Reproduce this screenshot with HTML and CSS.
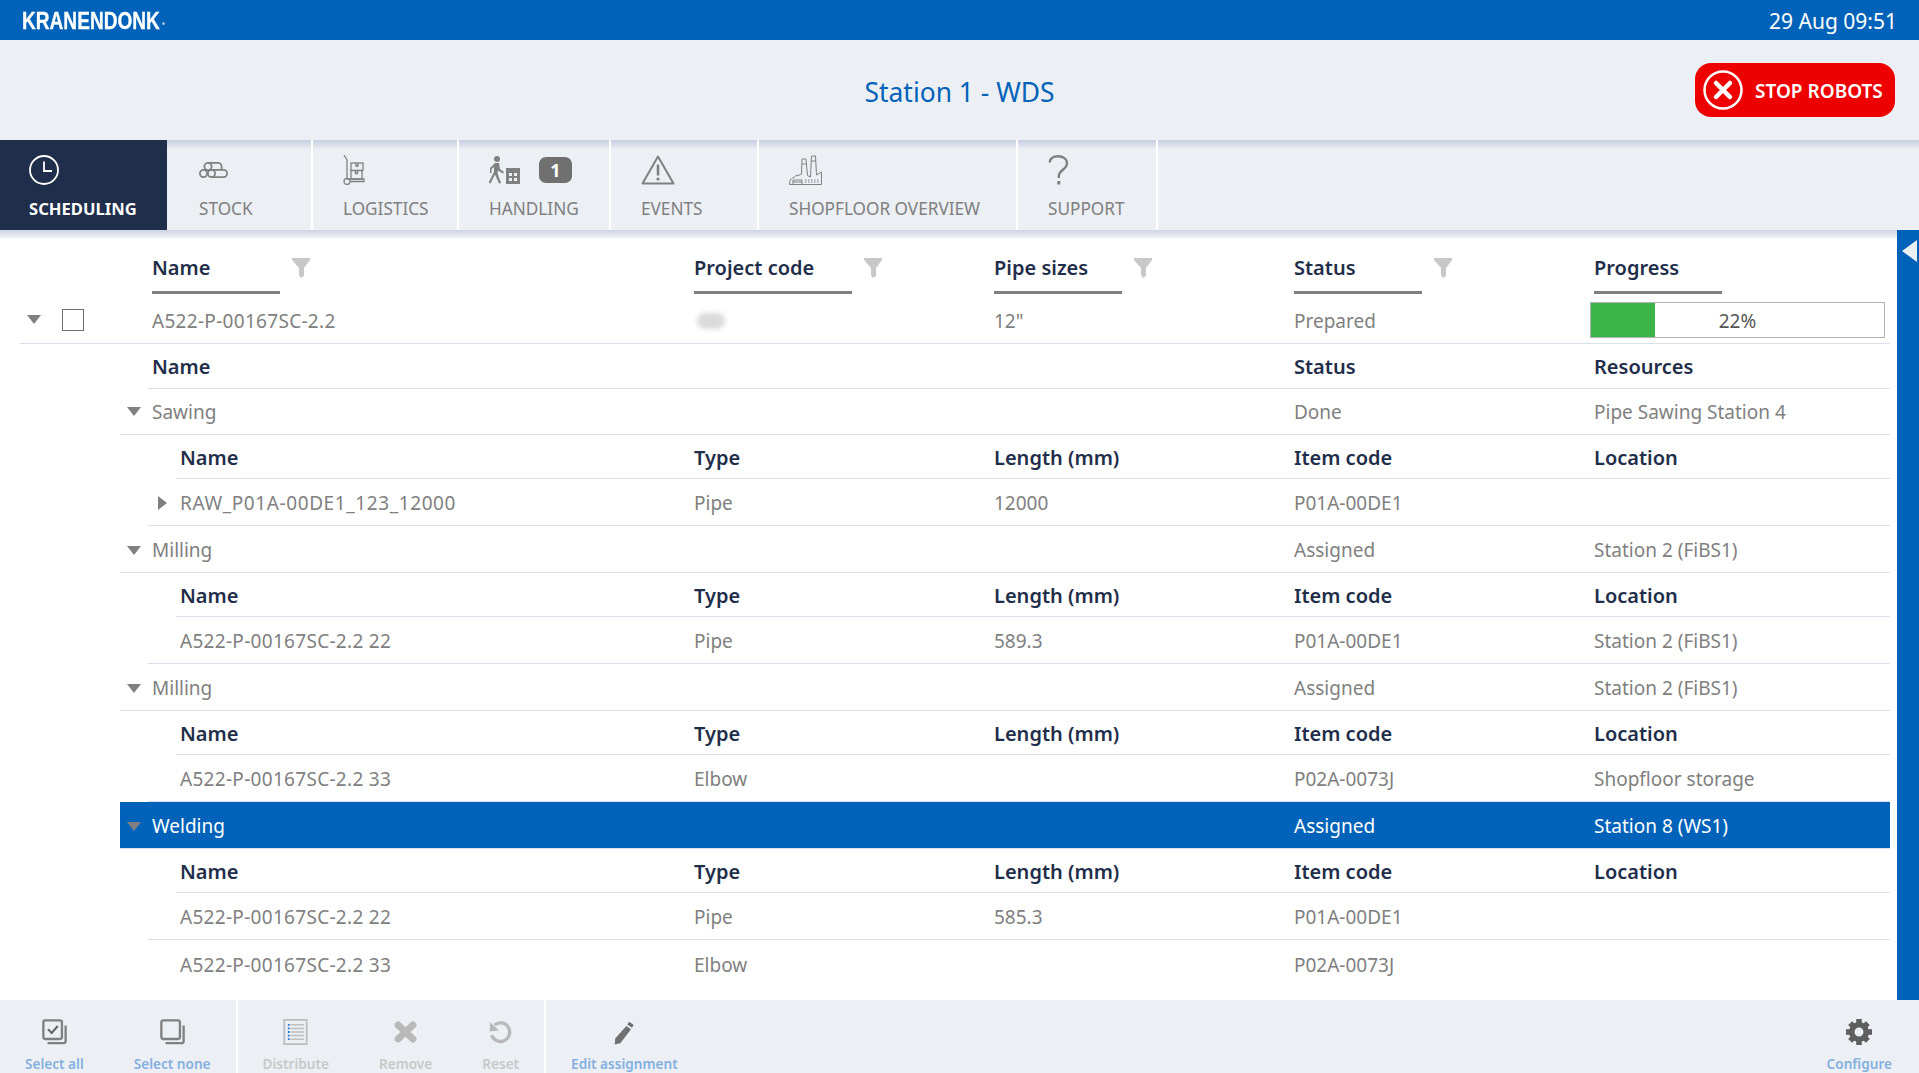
FILE: index.html
```html
<!DOCTYPE html>
<html lang="en">
<head>
    <meta charset="UTF-8">
    <meta name="viewport" content="width=device-width, initial-scale=1.0">
    <title>Station 1 - WDS</title>
    <link rel="stylesheet" href="styles.css">
</head>
<body>

<svg class="defs" width="0" height="0">
    <symbol id="i-funnel" viewBox="0 0 18 20">
        <path d="M0 0h18v2l-6 8v8l-3 2-2-3v-7L0 2z" fill="#c8c8c8"/>
    </symbol>
</svg>

<!-- top bar -->
<div class="topbar">
    <div class="logo">KRANENDONK<span class="logo-dot"></span></div>
    <div class="clock">29 Aug 09:51</div>
</div>

<!-- station title -->
<div class="header">
    <div></div>
    <h1 class="title">Station 1 - WDS</h1>
    <button class="stop-btn" type="button">
        <svg width="40" height="40" viewBox="0 0 40 40">
            <circle cx="20" cy="20" r="18.5" fill="none" stroke="#fff" stroke-width="2.5"/>
            <path d="M13 13l14 14M27 13L13 27" stroke="#fff" stroke-width="4.5" stroke-linecap="round"/>
        </svg>
        <span class="stop-text">STOP ROBOTS</span>
    </button>
</div>

<!-- main tabs -->
<div class="tabs">
    <div class="tab tab-active tab-scheduling">
        <div class="tab-icon">
            <svg width="30" height="30" viewBox="0 0 30 30">
                <circle cx="15" cy="15" r="14" fill="none" stroke="#fff" stroke-width="1.8"/>
                <path d="M15 6.5V16h8" fill="none" stroke="#fff" stroke-width="1.8"/>
            </svg>
        </div>
        <div class="tab-label">SCHEDULING</div>
    </div>
    <div class="tab tab-stock">
        <div class="tab-icon">
            <svg width="29" height="30" viewBox="0 0 29 30">
                <g fill="none" stroke="#808080" stroke-width="1.8">
                    <circle cx="4.5" cy="18.5" r="3.6"/>
                    <circle cx="12.5" cy="18.5" r="3.6"/>
                    <circle cx="9" cy="11.5" r="3.6"/>
                    <path d="M9 7.9h10a3.6 3.6 0 0 1 3.6 3.6V15M12.5 14.9h12a3.6 3.6 0 0 1 0 7.2h-12"/>
                </g>
            </svg>
        </div>
        <div class="tab-label">STOCK</div>
    </div>
    <div class="tab tab-logistics">
        <div class="tab-icon">
            <svg width="22" height="30" viewBox="0 0 22 30">
                <g fill="none" stroke="#808080" stroke-width="1.3">
                    <path d="M1 0l3 5v19"/>
                    <circle cx="4" cy="26.5" r="3"/>
                    <path d="M7 26.5h14V24H4"/>
                    <rect x="8" y="8" width="12" height="7.5"/>
                    <rect x="8" y="15.5" width="11" height="8.5"/>
                    <path d="M13 8v3h2V8M12.5 15.5v3h2v-3"/>
                </g>
            </svg>
        </div>
        <div class="tab-label">LOGISTICS</div>
    </div>
    <div class="tab tab-handling">
        <div class="tab-icon">
            <svg width="31" height="30" viewBox="0 0 31 30">
                <circle cx="8" cy="4" r="3" fill="#808080"/>
                <path d="M6 8h4l1 6 4 3-1 1.500-5-3-.5 3 3.500 9.500-2 .5-4-9-4.500 9-2-1L5 17V12l-2.500 2v4H1v-5z" fill="#808080"/>
                <rect x="17" y="13" width="14" height="16" fill="#808080"/>
                <g fill="#eceff4">
                    <rect x="20" y="18" width="3" height="3"/>
                    <rect x="25" y="18" width="3" height="3"/>
                    <rect x="20" y="23" width="3" height="3"/>
                    <rect x="25" y="23" width="3" height="3"/>
                </g>
            </svg>
            <span class="badge">1</span>
        </div>
        <div class="tab-label">HANDLING</div>
    </div>
    <div class="tab tab-events">
        <div class="tab-icon">
            <svg width="34" height="30" viewBox="0 0 34 30">
                <path d="M17 1.500L1.500 28.500h31z" fill="none" stroke="#808080" stroke-width="2" stroke-linejoin="round"/>
                <path d="M17 9.500v11" stroke="#808080" stroke-width="2.600"/>
                <circle cx="17" cy="24" r="1.600" fill="#808080"/>
            </svg>
        </div>
        <div class="tab-label">EVENTS</div>
    </div>
    <div class="tab tab-shopfloor">
        <div class="tab-icon">
            <svg width="33" height="30" viewBox="0 0 33 30">
                <g fill="none" stroke="#808080" stroke-width="1">
                    <path d="M.5 29.500h32V17l-5 3L26.500 1h-4l-1 21-3-1.500L17 4h-4l-.5 15L8 21v-1l-7 5z"/>
                    <path d="M22 6h5M13 9h4"/>
                    <path d="M4 29v-4h9v4M4 27h9"/>
                    <path d="M16 27h15M16 25h15" stroke-dasharray="1.500 1.500"/>
                </g>
            </svg>
        </div>
        <div class="tab-label">SHOPFLOOR OVERVIEW</div>
    </div>
    <div class="tab tab-support">
        <div class="tab-icon">
            <svg width="21" height="30" viewBox="0 0 21 30">
                <path d="M1.500 7.500C2 3.500 5.500 1.200 10 1.200c5 0 9 2.800 9 7 0 6.500-8.200 6.500-8.200 13v1.800" fill="none" stroke="#808080" stroke-width="2.400"/>
                <rect x="9.300" y="26" width="3" height="3.500" fill="#808080"/>
            </svg>
        </div>
        <div class="tab-label">SUPPORT</div>
    </div>
</div>

<div class="content">
    <div class="panel">

        <!-- column headers -->
        <div class="col-heads">
            <div class="col-head col-name"><span class="col-label">Name</span><svg class="funnel"><use href="#i-funnel"/></svg></div>
            <div class="col-head"><span class="col-label col-label-wide">Project code</span><svg class="funnel"><use href="#i-funnel"/></svg></div>
            <div class="col-head"><span class="col-label">Pipe sizes</span><svg class="funnel"><use href="#i-funnel"/></svg></div>
            <div class="col-head"><span class="col-label">Status</span><svg class="funnel"><use href="#i-funnel"/></svg></div>
            <div class="col-head col-progress"><span class="col-label">Progress</span></div>
        </div>

        <!-- order -->
        <div class="row row-order">
            <div class="cell-name"><span class="arrow-down"></span><span class="check"></span><span class="order-name">A522-P-00167SC-2.2</span></div>
            <div class="cell"><span class="blurred"></span></div>
            <div class="cell">12"</div>
            <div class="cell">Prepared</div>
            <div class="cell cell-last">
                <div class="progress"><div class="progress-fill" style="width: 22%"></div><span class="progress-text">22%</span></div>
            </div>
        </div>

        <div class="row row-head1">
            <div class="cell-name">Name</div>
            <div class="cell"></div>
            <div class="cell"></div>
            <div class="cell">Status</div>
            <div class="cell cell-last">Resources</div>
        </div>

        <!-- Sawing -->
        <div class="row row-group row-sawing">
            <div class="cell-name"><span class="arrow-down"></span>Sawing</div>
            <div class="cell"></div>
            <div class="cell"></div>
            <div class="cell">Done</div>
            <div class="cell cell-last">Pipe Sawing Station 4</div>
        </div>
        <div class="row row-head2">
            <div class="cell-name">Name</div>
            <div class="cell">Type</div>
            <div class="cell">Length (mm)</div>
            <div class="cell">Item code</div>
            <div class="cell cell-last">Location</div>
        </div>
        <div class="row row-item">
            <div class="cell-name cell-raw"><span class="arrow-right"></span>RAW_P01A-00DE1_123_12000</div>
            <div class="cell">Pipe</div>
            <div class="cell">12000</div>
            <div class="cell">P01A-00DE1</div>
            <div class="cell cell-last"></div>
        </div>

        <!-- Milling -->
        <div class="row row-group">
            <div class="cell-name"><span class="arrow-down"></span>Milling</div>
            <div class="cell"></div>
            <div class="cell"></div>
            <div class="cell">Assigned</div>
            <div class="cell cell-last">Station 2 (FiBS1)</div>
        </div>
        <div class="row row-head2">
            <div class="cell-name">Name</div>
            <div class="cell">Type</div>
            <div class="cell">Length (mm)</div>
            <div class="cell">Item code</div>
            <div class="cell cell-last">Location</div>
        </div>
        <div class="row row-item">
            <div class="cell-name">A522-P-00167SC-2.2 22</div>
            <div class="cell">Pipe</div>
            <div class="cell">589.3</div>
            <div class="cell">P01A-00DE1</div>
            <div class="cell cell-last">Station 2 (FiBS1)</div>
        </div>

        <!-- Milling -->
        <div class="row row-group">
            <div class="cell-name"><span class="arrow-down"></span>Milling</div>
            <div class="cell"></div>
            <div class="cell"></div>
            <div class="cell">Assigned</div>
            <div class="cell cell-last">Station 2 (FiBS1)</div>
        </div>
        <div class="row row-head2">
            <div class="cell-name">Name</div>
            <div class="cell">Type</div>
            <div class="cell">Length (mm)</div>
            <div class="cell">Item code</div>
            <div class="cell cell-last">Location</div>
        </div>
        <div class="row row-item">
            <div class="cell-name">A522-P-00167SC-2.2 33</div>
            <div class="cell">Elbow</div>
            <div class="cell"></div>
            <div class="cell">P02A-0073J</div>
            <div class="cell cell-last">Shopfloor storage</div>
        </div>

        <!-- Welding (selected) -->
        <div class="row row-group row-selected">
            <div class="cell-name"><span class="arrow-down"></span>Welding</div>
            <div class="cell"></div>
            <div class="cell"></div>
            <div class="cell">Assigned</div>
            <div class="cell cell-last">Station 8 (WS1)</div>
        </div>
        <div class="row row-head2">
            <div class="cell-name">Name</div>
            <div class="cell">Type</div>
            <div class="cell">Length (mm)</div>
            <div class="cell">Item code</div>
            <div class="cell cell-last">Location</div>
        </div>
        <div class="row row-item">
            <div class="cell-name">A522-P-00167SC-2.2 22</div>
            <div class="cell">Pipe</div>
            <div class="cell">585.3</div>
            <div class="cell">P01A-00DE1</div>
            <div class="cell cell-last"></div>
        </div>
        <div class="row row-item row-end">
            <div class="cell-name">A522-P-00167SC-2.2 33</div>
            <div class="cell">Elbow</div>
            <div class="cell"></div>
            <div class="cell">P02A-0073J</div>
            <div class="cell cell-last"></div>
        </div>
    </div>

    <div class="side-handle"><span class="side-arrow"></span></div>
</div>

<!-- bottom toolbar -->
<div class="toolbar">
    <div class="tool-group">
        <div class="tool">
            <svg width="27" height="28" viewBox="0 0 27 28">
                <rect x="1.500" y="1.500" width="20" height="20" rx="2" fill="none" stroke="#808080" stroke-width="2.500"/>
                <path d="M6.500 11l4 4 6.500-7.500" fill="none" stroke="#666" stroke-width="2.200"/>
                <path d="M25.500 7v17a2 2 0 0 1-2 2H6" fill="none" stroke="#808080" stroke-width="2.500"/>
            </svg>
            <span>Select all</span>
        </div>
        <div class="tool">
            <svg width="27" height="28" viewBox="0 0 27 28">
                <rect x="1.500" y="1.500" width="20" height="20" rx="2" fill="none" stroke="#808080" stroke-width="2.500"/>
                <path d="M25.500 7v17a2 2 0 0 1-2 2H6" fill="none" stroke="#808080" stroke-width="2.500"/>
            </svg>
            <span>Select none</span>
        </div>
    </div>
    <div class="tool-group">
        <div class="tool tool-off">
            <svg width="27" height="29" viewBox="0 0 27 29">
                <rect x="1" y="1" width="25" height="27" fill="none" stroke="#bdbdbd" stroke-width="2"/>
                <path d="M8 6.500h15M8 10.500h15M8 14.500h15M8 18.500h15M8 22.500h15" stroke="#bdbdbd" stroke-width="1.600"/>
                <path d="M6 5.500v2M6 9.500v2M6 13.500v2M6 17.500v2M6 21.500v2" stroke="#1a73c8" stroke-width="2"/>
            </svg>
            <span>Distribute</span>
        </div>
        <div class="tool tool-off">
            <svg width="25" height="28" viewBox="0 0 25 28">
                <path d="M4.500 6.500l16 15M20.500 6.500l-16 15" stroke="#b9b9b9" stroke-width="7.500" stroke-linecap="round"/>
            </svg>
            <span>Remove</span>
        </div>
        <div class="tool tool-off">
            <svg width="25" height="28" viewBox="0 0 25 28">
                <path d="M6 6.500a10 10 0 1 1-3 11" fill="none" stroke="#b9b9b9" stroke-width="3.600"/>
                <path d="M1 3.500l0 10 10-1z" fill="#b9b9b9"/>
            </svg>
            <span>Reset</span>
        </div>
    </div>
    <div class="tool-group tool-group-plain">
        <div class="tool">
            <svg width="25" height="28" viewBox="0 0 25 28">
                <path d="M17.500 3l5 3.500-2 3-5-3.500zM14.500 7.500l5 3.500L8 26l-6 1.500.5-6.500z" fill="#707070"/>
            </svg>
            <span>Edit assignment</span>
        </div>
    </div>
    <div class="tool-group tool-group-plain tool-group-end">
        <div class="tool">
            <svg width="28" height="28" viewBox="0 0 28 28">
                <circle cx="14" cy="14" r="7.800" fill="none" stroke="#5f5f5f" stroke-width="6"/>
                <g fill="#5f5f5f">
                    <rect x="11" y="0" width="6" height="6"/>
                    <rect x="11" y="22" width="6" height="6"/>
                    <rect x="0" y="11" width="6" height="6"/>
                    <rect x="22" y="11" width="6" height="6"/>
                    <rect x="11" y="0.500" width="6" height="6" transform="rotate(45 14 14)"/>
                    <rect x="11" y="21.500" width="6" height="6" transform="rotate(45 14 14)"/>
                    <rect x="0.500" y="11" width="6" height="6" transform="rotate(45 14 14)"/>
                    <rect x="21.500" y="11" width="6" height="6" transform="rotate(45 14 14)"/>
                </g>
            </svg>
            <span>Configure</span>
        </div>
    </div>
</div>

</body>
</html>
```

FILE: styles.css
```css
/* general */
html, body {
    margin: 0;
    height: 100%;
}

body {
    font-family: "Noto Sans", "Open Sans", sans-serif;
    font-size: 19px;
    color: #808080;
    background-color: #fff;
    display: flex;
    flex-direction: column;
    height: 1073px;
    overflow: hidden;
}

.defs {
    position: absolute;
}

/* top bar */
.topbar {
    height: 40px;
    flex: none;
    box-sizing: border-box;
    padding: 2px 22px 0;
    background-color: #0063b9;
    color: #fff;
    display: flex;
    justify-content: space-between;
    align-items: center;
}

.logo {
    font-family: "Liberation Sans", sans-serif;
    font-weight: bold;
    font-size: 23px;
    display: flex;
    align-items: center;
    -webkit-text-stroke: 0.3px #fff;
    transform: scaleX(0.83);
    transform-origin: left center;
}

.logo-dot {
    width: 3px;
    height: 3px;
    margin-left: 3px;
    margin-top: 4px;
    border-radius: 50%;
    background-color: #b9c6d6;
}

.clock {
    font-size: 21px;
}

/* title row */
.header {
    height: 100px;
    flex: none;
    background-color: #eceff4;
    display: grid;
    grid-template-columns: 1fr auto 1fr;
    align-items: center;
}

.title {
    margin: 3px 0 0;
    font-size: 26.4px;
    font-weight: normal;
    color: #0063b9;
}

.stop-btn {
    justify-self: end;
    margin-right: 24px;
    width: 200px;
    height: 54px;
    padding: 0 0 0 8px;
    border: none;
    border-radius: 16px;
    background-color: #ee0000;
    color: #fff;
    font-family: inherit;
    font-size: 19px;
    font-weight: 600;
    display: flex;
    align-items: center;
    gap: 12px;
}

.stop-text {
    padding-top: 2px;
}

/* tabs */
.tabs {
    height: 90px;
    flex: none;
    display: flex;
    background: linear-gradient(#c6cee0, #e6e9f0) top / 100% 8px no-repeat #eceff4;
}

.tab {
    box-sizing: border-box;
    padding: 15px 0 0 30px;
    border-right: 2px solid #fff;
}

.tab-scheduling { width: 167px; padding-left: 29px; }
.tab-stock { width: 146px; padding-left: 32px; }
.tab-logistics { width: 146px; }
.tab-handling { width: 152px; }
.tab-events { width: 148px; }
.tab-shopfloor { width: 259px; }
.tab-support { width: 140px; }

.tab-active {
    background-color: #1f2e4a;
    color: #fff;
    border-right: none;
    font-weight: 700;
}

.tab-icon {
    height: 30px;
    display: flex;
    align-items: flex-start;
}

.tab-label {
    margin-top: 12px;
    font-size: 17.2px;
    line-height: 24px;
}

.tab-active .tab-label {
    font-size: 16.6px;
}

.badge {
    box-sizing: border-box;
    width: 33px;
    height: 26px;
    margin: 2px 0 0 19px;
    border-radius: 7px;
    background-color: #707070;
    color: #fff;
    font-weight: 700;
    font-size: 18px;
    line-height: 26px;
    text-align: center;
}

/* content */
.content {
    flex: 1;
    display: flex;
    min-height: 0;
}

.panel {
    flex: 1;
    min-width: 0;
    padding: 26px 7px 0 0;
    background: linear-gradient(#ccd3e3, #f0f2f6) top / 100% 8px no-repeat #fff;
}

.side-handle {
    width: 22px;
    flex: none;
    background-color: #0063b9;
    padding-top: 10px;
    box-sizing: border-box;
}

.side-arrow {
    display: block;
    width: 0;
    height: 0;
    margin-left: 5px;
    border-top: 11px solid transparent;
    border-bottom: 11px solid transparent;
    border-right: 15px solid #eceff4;
}

/* column headers */
.col-heads {
    display: flex;
    padding-left: 152px;
}

.col-head {
    width: 300px;
    flex: none;
    display: flex;
    align-items: flex-start;
    color: #1f2e4a;
    font-size: 20px;
    font-weight: 600;
}

.col-name {
    width: 542px;
}

.col-progress {
    width: auto;
}

.col-label {
    display: block;
    width: 128px;
    height: 24px;
    line-height: 24px;
    padding-bottom: 11px;
    border-bottom: 3px solid #808080;
}

.col-label-wide {
    width: 158px;
}

.funnel {
    width: 18px;
    height: 20px;
    margin: 2px 0 0 12px;
}

/* rows */
.row {
    display: flex;
    box-sizing: border-box;
    align-items: center;
    border-bottom: 1px solid #d9e1ea;
}

.cell-name {
    flex: none;
    box-sizing: border-box;
    display: flex;
    align-items: center;
}

.cell {
    flex: none;
    width: 300px;
}

.cell-last {
    flex: 1;
    width: auto;
}

.row-order {
    margin-left: 20px;
    height: 50px;
    padding-top: 2px;
}

.row-order .cell-name {
    width: 674px;
    padding-left: 7px;
}

.row-order .cell {
    padding-top: 2px;
}

.row-order .cell-last {
    padding-top: 0;
}

.check {
    width: 22px;
    height: 22px;
    box-sizing: border-box;
    margin-left: 21px;
    border: 1px solid #707070;
    background-color: #fff;
}

.order-name {
    margin-left: 68px;
    padding-top: 2px;
    letter-spacing: 0.3px;
}

.blurred {
    display: block;
    width: 28px;
    height: 16px;
    margin-left: 3px;
    border-radius: 8px;
    background-color: #dadada;
    filter: blur(2.5px);
}

.row-head1,
.row-head2 {
    color: #1f2e4a;
    font-size: 20px;
    font-weight: 600;
}

.row-head1 {
    margin-left: 148px;
    height: 45px;
}

.row-head1 .cell-name {
    width: 546px;
    padding-left: 4px;
}

.row-group {
    margin-left: 120px;
    height: 47px;
    padding-top: 2px;
}

.row-sawing {
    height: 46px;
    padding-top: 0;
}

.row-group .cell-name {
    width: 574px;
    padding-left: 7px;
}

.row-group .arrow-down {
    margin-right: 11px;
}

.row-head2 {
    margin-left: 176px;
    height: 44px;
    padding-top: 2px;
}

.row-head2 .cell-name {
    width: 518px;
    padding-left: 4px;
}

.row-item {
    margin-left: 148px;
    height: 47px;
    padding-top: 2px;
}

.row-item .cell-name {
    width: 546px;
    padding-left: 32px;
    letter-spacing: 0.3px;
}

.row-item .cell-raw {
    letter-spacing: 0.6px;
}

.row-item .arrow-right {
    margin-left: -22px;
    margin-right: 13px;
}

.row-selected {
    background-color: #0063b9;
    color: #fff;
}

.row-end {
    border-bottom: none;
}

.arrow-down {
    flex: none;
    width: 0;
    height: 0;
    border-left: 7px solid transparent;
    border-right: 7px solid transparent;
    border-top: 9px solid #808080;
}

.arrow-right {
    flex: none;
    width: 0;
    height: 0;
    border-top: 7px solid transparent;
    border-bottom: 7px solid transparent;
    border-left: 9px solid #808080;
}

/* progress bar */
.progress {
    position: relative;
    box-sizing: border-box;
    width: 295px;
    height: 36px;
    margin-left: -4px;
    border: 1px solid #b4b4b4;
    display: flex;
    align-items: center;
    justify-content: center;
    color: #555;
}

.progress-fill {
    position: absolute;
    left: 0;
    top: 0;
    bottom: 0;
    background-color: #3bb54a;
}

.progress-text {
    position: relative;
    padding-top: 2px;
}

/* toolbar */
.toolbar {
    height: 73px;
    flex: none;
    display: flex;
    background-color: #eceff4;
}

.tool-group {
    display: flex;
    gap: 50px;
    padding: 19px 25px 0;
    border-right: 2px solid #fff;
}

.tool-group-plain {
    border-right: none;
}

.tool-group-end {
    margin-left: auto;
    padding-right: 27px;
}

.tool {
    display: flex;
    flex-direction: column;
    align-items: center;
    color: #84b0e0;
    font-size: 13.6px;
    font-weight: 600;
    line-height: 18px;
}

.tool svg {
    height: 28px;
    margin-bottom: 10px;
}

.tool-off {
    color: #c8c8c8;
}
```
